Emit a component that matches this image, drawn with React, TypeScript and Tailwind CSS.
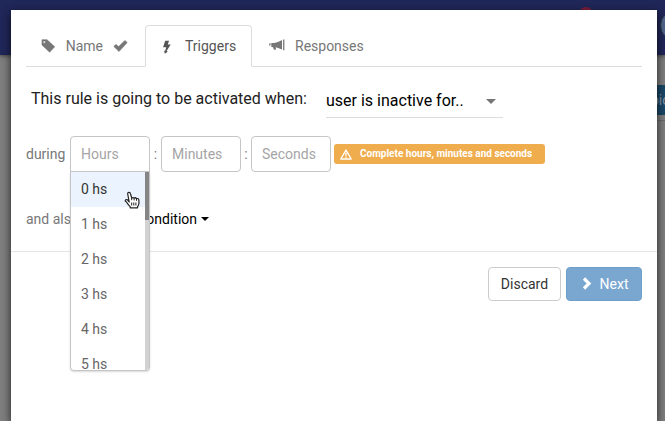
import React from "react";

const hours = ["0 hs", "1 hs", "2 hs", "3 hs", "4 hs", "5 hs"];

function TagIcon() {
  return (
    <svg width="15" height="15" viewBox="0 0 15 15" fill="currentColor" aria-hidden="true">
      <path fillRule="evenodd" d="M1 0.6H6.2L14 7.8L8.8 13.3L1 6ZM3.3 1.8A1.2 1.2 0 1 0 3.3 4.2A1.2 1.2 0 0 0 3.3 1.8Z" strokeLinejoin="round" stroke="currentColor" strokeWidth="0.6" />
    </svg>
  );
}

function CheckIcon() {
  return (
    <svg width="15" height="15" viewBox="0 0 15 15" fill="currentColor" aria-hidden="true">
      <path d="M0.8 7.4L2.9 5.4L5.7 7.6L11.9 1.4L14.2 3.6L6 12.5Z" stroke="currentColor" strokeWidth="0.6" strokeLinejoin="round" />
    </svg>
  );
}

function FlashIcon() {
  return (
    <svg width="14" height="15" viewBox="0 0 14 15" fill="currentColor" aria-hidden="true">
      <path d="M5.2 1.7H9L7.8 5.6H10.7L6.6 12L7.8 12.4L4.9 14.8L4 11.4L5 11.9L6.3 8.3H3.1Z" />
    </svg>
  );
}

function BullhornIcon() {
  return (
    <svg width="16" height="14" viewBox="0 0 16 14" fill="currentColor" aria-hidden="true">
      <path d="M0.2 4.2H1.6V6.6H0.2ZM2.3 4C6.5 4 10 3 13 0.9V10.6C11 9.4 8.7 8.6 6.6 8.2L7.2 10.4L5 10.8L3.7 8H2.3ZM14.1 0.5H15.4V11.2H14.1Z" />
    </svg>
  );
}

function WarningIcon() {
  return (
    <svg width="12" height="11" viewBox="0 0 12 11" aria-hidden="true">
      <path d="M6 1L11.2 10H0.8Z" fill="none" stroke="currentColor" strokeWidth="1.4" strokeLinejoin="round" />
      <path d="M5.2 3.8H6.8L6.5 7.2H5.5ZM5.4 7.8H6.6V9H5.4Z" fill="currentColor" />
    </svg>
  );
}

function ChevronIcon() {
  return (
    <svg width="14" height="14" viewBox="0 0 14 14" aria-hidden="true">
      <path d="M4 1.5L9 6.5L4 11.5" fill="none" stroke="currentColor" strokeWidth="3.2" />
    </svg>
  );
}

function HandCursor() {
  return (
    <svg className="pointer-events-none absolute left-[53px] top-[19px]" width="17" height="19" viewBox="0 0 17 19" aria-hidden="true">
      <path d="M5.2 11L3.7 3Q3.7 1.2 5 1.3Q6.2 1.4 6.6 3L7.7 7Q8.9 6 10.1 7.1Q11.5 6.2 12.5 7.6Q14.9 7 14.9 9.6V12.5Q14.7 14 13.6 15.6V16.8H6.2V15.6Q4.5 14 3.6 12.6Q2.7 11.1 1.2 10.1Q1.2 8.2 3.5 8.8Z" fill="white" stroke="#222" strokeWidth="1.2" strokeLinejoin="round" />
      <path d="M7.7 7V9.2M10.1 7.2V9.4M12.5 7.8V9.8M7.7 11.5V14.5M9.8 11.5V14.5M11.9 11.5V14.5" fill="none" stroke="#222" />
    </svg>
  );
}

function PageBehind() {
  return (
    <div className="absolute inset-0 overflow-hidden bg-[#7f7f7f]" aria-hidden="true">
      <div className="h-[55px] bg-[#202759] shadow-[0_1px_4px_rgba(0,0,0,0.5)]" />
      <span className="absolute right-[72px] top-[7px] size-[14px] rounded-full bg-[#7d1d3c]" />
      <span className="absolute -right-[26px] top-[10px] size-[31px] rounded-full border border-[#27394c] bg-[#52658b]" />
      <div className="absolute -right-4 top-[85px] h-[30px] w-[30px] bg-[#1b4868] text-sm leading-[30px] text-[#8496a5]">pic</div>
      <div className="absolute right-0 top-[120px] w-3 border-t border-[#6b6b6b]" />
    </div>
  );
}

const tabClass = "flex h-[42px] items-center rounded-t border px-[14px]";
const inputClass = "h-9 w-20 border border-[#c5c5c5] bg-white px-[10px] text-sm text-[#555] outline-none placeholder:text-[#a5a5a5]";

export default function App() {
  return (
    <div className="relative h-screen overflow-hidden pt-[10px] font-['Roboto',sans-serif] text-sm text-[#777]">
      <PageBehind />
      <main role="dialog" aria-label="Rule" className="relative mr-[8px] ml-[11px] min-h-full bg-white pt-[15px] shadow-[0_3px_9px_rgba(0,0,0,0.75)]">
        <div role="tablist" className="mx-[15px] flex border-b border-[#ddd]">
          <button role="tab" aria-selected="false" className={`${tabClass} -mb-px mr-[2px] w-[117px] border-transparent`}>
            <TagIcon />
            <span className="ml-[10px]">Name</span>
            <span className="ml-[10px]"><CheckIcon /></span>
          </button>
          <button role="tab" aria-selected="true" className={`${tabClass} -mb-px mr-[2px] w-[107px] border-[#ddd] border-b-white text-[#555]`}>
            <FlashIcon />
            <span className="ml-[11px]">Triggers</span>
          </button>
          <button role="tab" aria-selected="false" className={`${tabClass} -mb-px border-transparent`}>
            <BullhornIcon />
            <span className="ml-[10px]">Responses</span>
          </button>
        </div>

        <div className="mt-[18px] flex pl-5">
          <label htmlFor="trigger" className="w-[295px] pt-[2px] text-base leading-6 text-[#212121]">This rule is going to be activated when:</label>
          <div className="relative w-[177px]">
            <select id="trigger" className="h-[33px] w-full appearance-none border-b border-[#ddd] bg-white text-base text-black outline-none">
              <option>user is inactive for..</option>
            </select>
            <span className="pointer-events-none absolute right-[7px] top-[14px] border-x-5 border-t-5 border-x-transparent border-t-[#757575]" />
          </div>
        </div>

        <div className="mt-[18px] flex items-center pl-[15px]">
          <label htmlFor="hours" className="w-11">during</label>
          <div className="relative z-10">
            <input id="hours" role="combobox" aria-expanded="true" aria-controls="hour-list" placeholder="Hours" className={`${inputClass} block rounded-t`} />
            <div className="absolute left-0 top-[35px] h-[200px] w-20 overflow-hidden rounded-b border border-[#c5c5c5] bg-white shadow-[0_1px_2px_rgba(0,0,0,0.15)]">
              <ul id="hour-list" role="listbox" aria-label="Hours">
                {hours.map((hour, index) => (
                  <li key={hour} role="option" aria-selected={index === 0} className={`h-[35px] px-[10px] leading-[35px] ${index === 0 ? "bg-[#ebf3fe] text-[#333]" : "text-[#666]"}`}>{hour}</li>
                ))}
              </ul>
              <div className="absolute right-0 top-0 h-full w-1 bg-[#d2d2d2]"><div className="h-12 bg-[#858585]" /></div>
              <HandCursor />
            </div>
          </div>
          <span className="w-[11px] text-center">:</span>
          <input aria-label="Minutes" placeholder="Minutes" className={`${inputClass} rounded`} />
          <span className="w-[10px] text-center">:</span>
          <input aria-label="Seconds" placeholder="Seconds" className={`${inputClass} rounded`} />
          <span className="ml-[3px] flex h-5 min-w-[211px] items-center gap-2 rounded-[3px] bg-[#f0ad4e] px-[6px] text-[10px] font-bold whitespace-nowrap text-white">
            <WarningIcon />
            Complete hours, minutes and seconds
          </span>
        </div>

        <div className="mt-[35px] flex h-6 items-center pl-[15px]">
          <span className="w-[113px]">and also</span>
          <button className="flex items-center gap-1 text-black">
            condition
            <span className="border-x-4 border-t-4 border-x-transparent border-t-black" />
          </button>
        </div>

        <div className="mt-5 flex justify-end gap-[5px] border-t border-[#e5e5e5] px-[15px] pt-[15px]">
          <button className="h-[34px] w-[73px] rounded border border-[#ccc] bg-white text-[#333]">Discard</button>
          <button className="flex h-[34px] w-[76px] items-center justify-center gap-[6px] rounded border border-[#6d9fcb] bg-[#7aa7d0] text-white"><ChevronIcon />Next</button>
        </div>
      </main>
    </div>
  );
}
